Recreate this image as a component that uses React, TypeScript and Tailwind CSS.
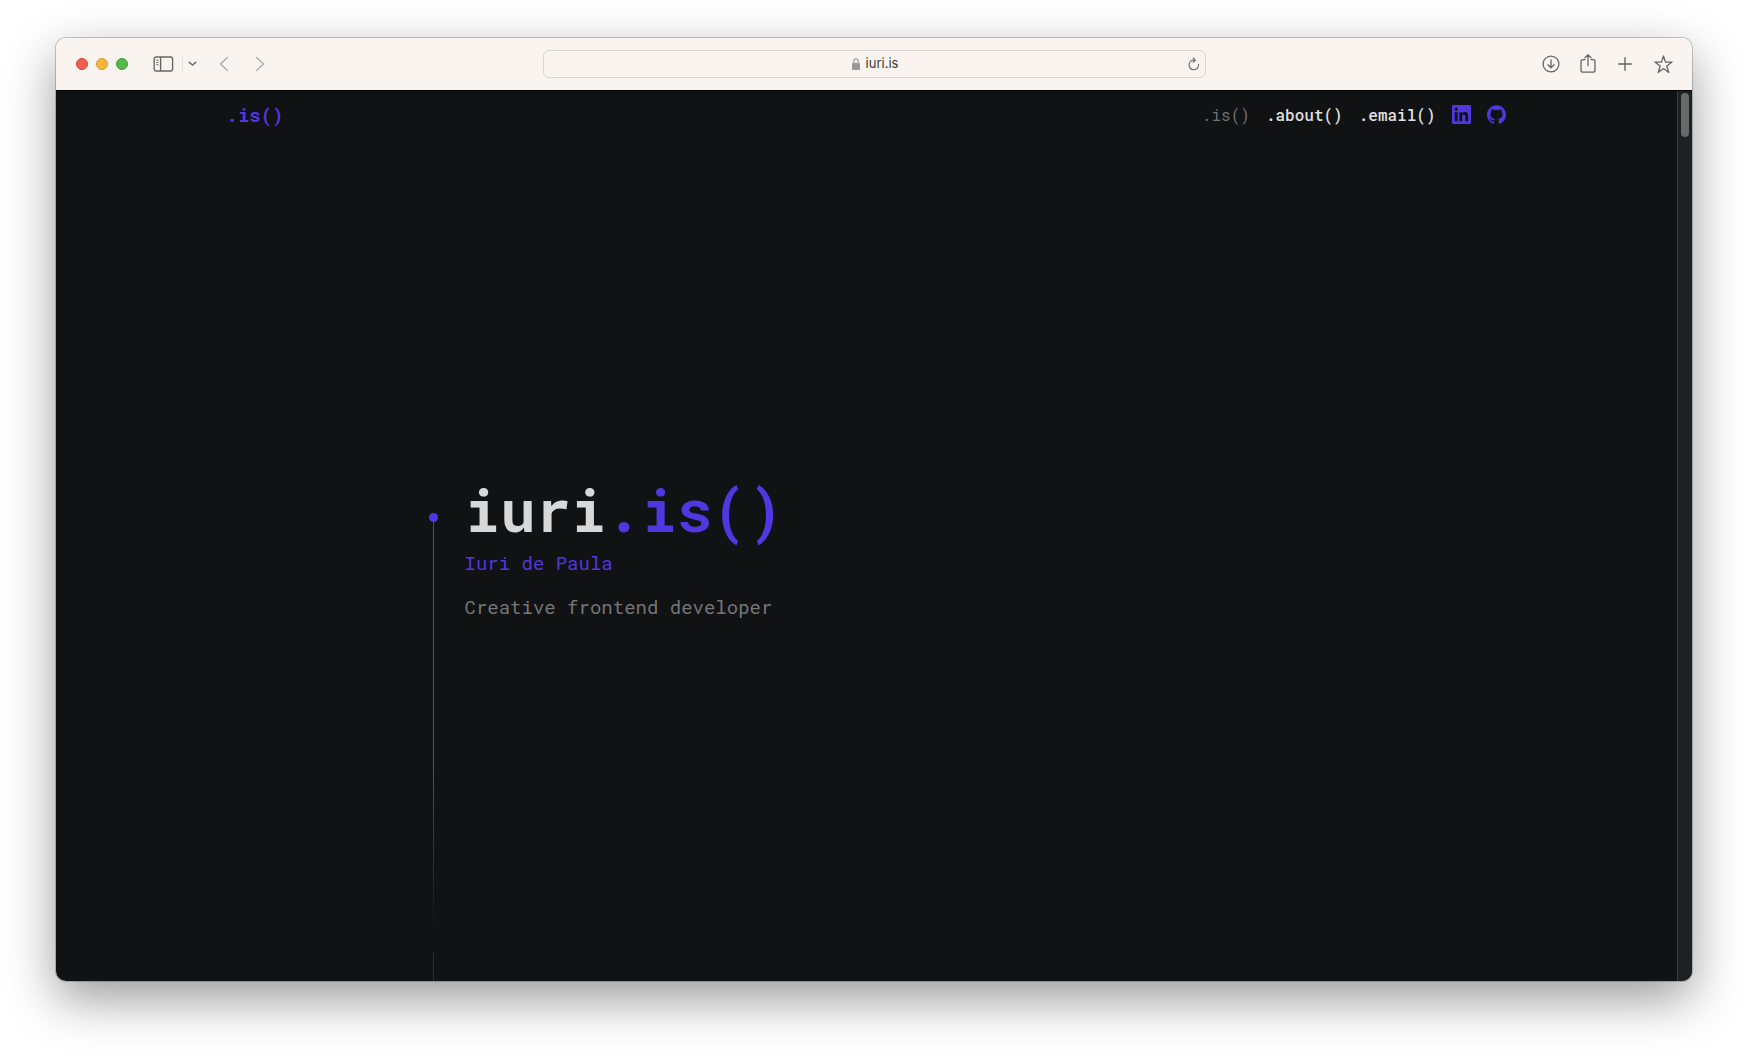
function Toolbar() {
  return (
    <div className="grid h-[53px] grid-cols-[1fr_minmax(0,663px)_1fr] items-center border-b border-black bg-[#f9f4f0] text-[#6b6460]">
      <div className="flex items-center">
        <div className="ml-5 flex gap-2">
          <button aria-label="Close" className="size-3 rounded-full border border-[#d9473c] bg-[#ec5f51]" />
          <button aria-label="Minimize" className="size-3 rounded-full border border-[#dd9a2f] bg-[#f5b53c]" />
          <button aria-label="Zoom" className="size-3 rounded-full border border-[#3fa036] bg-[#53b948]" />
        </div>
        <button aria-label="Sidebar" className="ml-[25px]">
          <svg width="21" height="16" viewBox="0 0 21 16" fill="none" stroke="currentColor" strokeWidth="1.4">
            <rect x="1.2" y="1" width="18.4" height="14" rx="2" />
            <path d="M7.6 1v14" />
            <path d="M3.3 4.2h2.2M3.3 6.5h2.2M3.3 8.8h2.2" strokeWidth="1" />
          </svg>
        </button>
        <span className="ml-2 h-[18px] w-px bg-[#e8e3df]" />
        <button aria-label="Tab groups" className="ml-[5px]">
          <svg width="9" height="6" viewBox="0 0 9 6" fill="none" stroke="currentColor" strokeWidth="1.5" strokeLinecap="round" strokeLinejoin="round">
            <path d="M1.2 1.4 4.5 4 7.8 1.4" />
          </svg>
        </button>
        <button aria-label="Back" className="ml-[22px] text-[#b3aca8]">
          <svg width="10" height="16" viewBox="0 0 10 16" fill="none" stroke="currentColor" strokeWidth="1.5" strokeLinecap="round" strokeLinejoin="round">
            <path d="M8.5 1.5 1.5 8l7 6.5" />
          </svg>
        </button>
        <button aria-label="Forward" className="ml-[26px] text-[#b3aca8]">
          <svg width="10" height="16" viewBox="0 0 10 16" fill="none" stroke="currentColor" strokeWidth="1.5" strokeLinecap="round" strokeLinejoin="round">
            <path d="M1.5 1.5 8.5 8l-7 6.5" />
          </svg>
        </button>
      </div>
      <div className="flex h-7 items-center rounded-md border border-[#dad5d1] px-[5px]">
        <span className="w-3.5" />
        <div className="flex flex-1 items-center justify-center gap-1.5 font-[Inter,sans-serif] text-[13px] text-[#3c3836]">
          <svg width="8" height="12" viewBox="0 0 8 12" className="text-[#9d9691]">
            <rect x="0" y="5" width="8" height="7" rx="1.2" fill="currentColor" />
            <path d="M1.8 5.4V3.2a2.2 2.4 0 0 1 4.4 0v2.2" fill="none" stroke="currentColor" strokeWidth="1.1" />
          </svg>
          <span>iuri.is</span>
        </div>
        <button aria-label="Reload">
          <svg width="12" height="14" viewBox="0 0 12 14" fill="none" stroke="currentColor" strokeWidth="1.1" strokeLinecap="round" strokeLinejoin="round">
            <path d="M10.6 7.4A4.8 4.8 0 1 1 6.6 3.2" />
            <path d="M5.2 1 7.4 3.3 5.2 5.4" />
          </svg>
        </button>
      </div>
      <div className="mr-[19px] flex items-center justify-end">
        <button aria-label="Downloads">
          <svg width="18" height="18" viewBox="0 0 18 18" fill="none" stroke="currentColor" strokeWidth="1.3" strokeLinecap="round" strokeLinejoin="round">
            <circle cx="9" cy="9" r="7.9" />
            <path d="M9 5v7.6M6 9.8l3 3 3-3" />
          </svg>
        </button>
        <button aria-label="Share" className="ml-5">
          <svg width="16" height="20" viewBox="0 0 16 20" fill="none" stroke="currentColor" strokeWidth="1.3" strokeLinecap="round" strokeLinejoin="round">
            <path d="M5 5.6H3a2 2 0 0 0-2 2v8.6a2 2 0 0 0 2 2h10a2 2 0 0 0 2-2V7.6a2 2 0 0 0-2-2h-2" />
            <path d="M8 11.6V.8M4.800 3.900 8 .8l3.200 3.100" />
          </svg>
        </button>
        <button aria-label="New tab" className="ml-[22px]">
          <svg width="14" height="14" viewBox="0 0 14 14" fill="none" stroke="currentColor" strokeWidth="1.4" strokeLinecap="round">
            <path d="M7 .7v12.600M.7 7h12.600" />
          </svg>
        </button>
        <button aria-label="Bookmarks" className="ml-[22px]">
          <svg width="19" height="19" viewBox="0 0 19 19" fill="none" stroke="currentColor" strokeWidth="1.3" strokeLinejoin="round">
            <path d="M9.500 1 11.500 7.100h6.600l-5.300 3.900 2 6.500-5.300-3.900-5.300 3.900 2-6.500L.9 7.100h6.600z" />
          </svg>
        </button>
      </div>
    </div>
  );
}

function LinkedInIcon() {
  return (
    <svg width="19" height="19" viewBox="0 0 24 24" fill="currentColor">
      <path d="M20.447 20.452h-3.554v-5.569c0-1.328-.027-3.037-1.852-3.037-1.853 0-2.136 1.445-2.136 2.939v5.667H9.351V9h3.414v1.561h.046c.477-.9 1.637-1.850 3.370-1.850 3.601 0 4.267 2.370 4.267 5.455v6.286zM5.337 7.433a2.062 2.062 0 0 1-2.063-2.065 2.064 2.064 0 1 1 2.063 2.065zm1.782 13.019H3.555V9h3.564v11.452zM22.225 0H1.771C.792 0 0 .774 0 1.729v20.542C0 23.227.792 24 1.771 24h20.451C23.200 24 24 23.227 24 22.271V1.729C24 .774 23.200 0 22.222 0h.003z" />
    </svg>
  );
}

function GitHubIcon() {
  return (
    <svg width="19" height="19" viewBox="0 0 24 24" fill="currentColor">
      <path d="M12 .297c-6.630 0-12 5.373-12 12 0 5.303 3.438 9.800 8.205 11.385.6.113.82-.258.82-.577 0-.285-.01-1.040-.015-2.040-3.338.724-4.042-1.610-4.042-1.610C4.422 18.070 3.633 17.700 3.633 17.700c-1.087-.744.084-.729.084-.729 1.205.084 1.838 1.236 1.838 1.236 1.070 1.835 2.809 1.305 3.495.998.108-.776.417-1.305.76-1.605-2.665-.3-5.466-1.332-5.466-5.930 0-1.310.465-2.380 1.235-3.220-.135-.303-.54-1.523.105-3.176 0 0 1.005-.322 3.300 1.230.96-.267 1.980-.399 3-.405 1.020.006 2.040.138 3 .405 2.280-1.552 3.285-1.230 3.285-1.230.645 1.653.24 2.873.12 3.176.765.84 1.230 1.910 1.230 3.220 0 4.610-2.805 5.625-5.475 5.920.42.36.81 1.096.81 2.220 0 1.606-.015 2.896-.015 3.286 0 .315.21.69.825.57C20.565 22.092 24 17.592 24 12.297c0-6.627-5.373-12-12-12" />
    </svg>
  );
}

function SiteHeader() {
  return (
    <header className="mx-auto flex h-[47px] w-full max-w-7xl items-center justify-between">
      <a href="#top" className="text-[19px] leading-6 font-bold text-[#5236df]">.is()</a>
      <nav className="flex items-center gap-4 pr-px text-base leading-[22px] text-[#dfdfdf]">
        <a href="#is" className="text-[#6f7071]">.is()</a>
        <a href="#about" className="font-medium">.about()</a>
        <a href="#email" className="font-medium">.email()</a>
        <a href="#linkedin" aria-label="LinkedIn" className="text-[#5236df]"><LinkedInIcon /></a>
        <a href="#github" aria-label="GitHub" className="text-[#5236df]"><GitHubIcon /></a>
      </nav>
    </header>
  );
}

function Hero() {
  return (
    <section className="mx-auto flex w-full max-w-[876px] flex-1 gap-[27px]">
      <div className="flex w-[9px] flex-col items-center pt-[375px]">
        <span className="size-[9px] rounded-full bg-[#5236df]" />
        <span className="w-px flex-1 bg-linear-to-b from-[#5236df] from-60% to-transparent" />
        <span className="mt-5 h-7 w-px bg-[#2b2168]" />
      </div>
      <div className="pt-[334px]">
        <h1 className="text-[59px] leading-[74px] font-bold text-[#d8d8d8]">
          iuri<span className="text-[#5236df]">.is()</span>
        </h1>
        <p className="mt-[3px] text-[19px] leading-7 text-[#5236df]">Iuri de Paula</p>
        <p className="mt-4 text-[19px] leading-7 text-[#757677]">Creative frontend developer</p>
      </div>
    </section>
  );
}

export default function App() {
  return (
    <div className="flex min-h-screen flex-col bg-white px-14 pt-[38px] pb-[75px]">
      <div className="flex flex-1 flex-col overflow-hidden rounded-[10px] shadow-[0_0_0_1px_rgba(0,0,0,0.2),0_18px_50px_rgba(0,0,0,0.4)]">
        <Toolbar />
        <div className="flex flex-1 bg-[#111214]">
          <main className="flex flex-1 flex-col font-['Roboto_Mono','Liberation_Mono',monospace]">
            <SiteHeader />
            <Hero />
          </main>
          <div className="w-[15px] border-l border-[#3a3b3d] bg-[#1f2022] px-[3px] pt-0.5">
            <div className="h-11 rounded-full bg-[#686969]" />
          </div>
        </div>
      </div>
    </div>
  );
}
